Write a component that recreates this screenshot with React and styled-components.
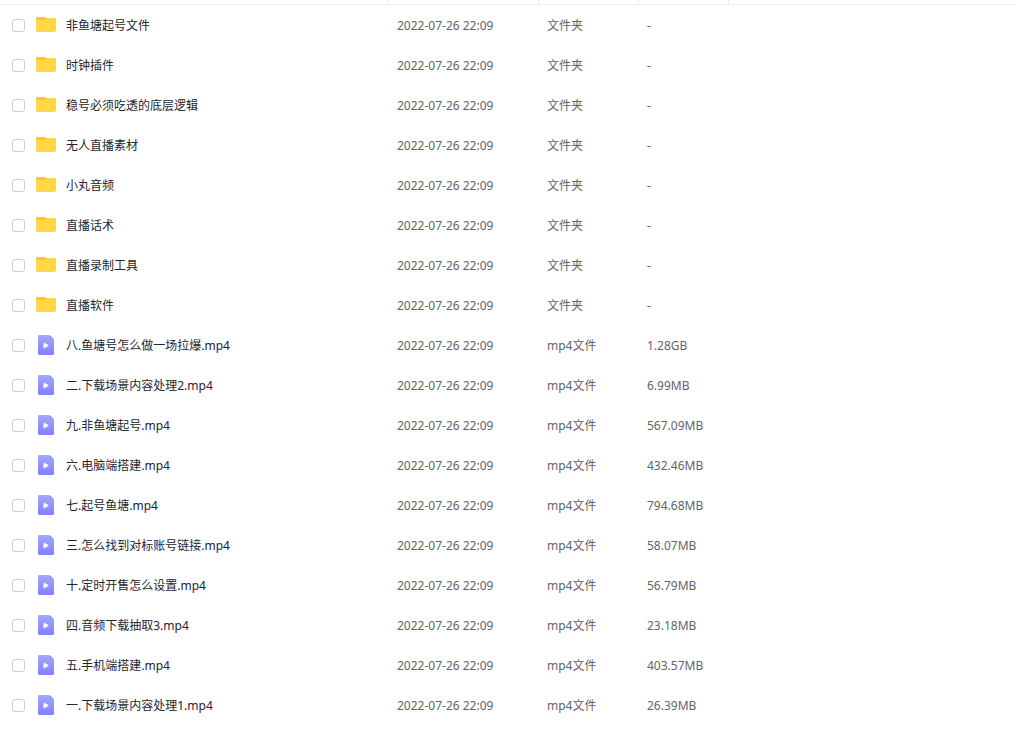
import React from 'react'
import styled, { createGlobalStyle } from 'styled-components'

const GlobalStyle = createGlobalStyle`
body {
    margin: 0;
    background-color: #fff;
    font-family: "Noto Sans", "Noto Sans CJK SC", sans-serif;
    font-size: 12px;
}
`

const Table = styled.table`
width: 100%;
table-layout: fixed;
border-collapse: separate;
border-spacing: 0;
`

const Col = styled.col`
width: ${(props) => props.$width};
`

const HeadCell = styled.th`
height: 4px;
padding: 0;
border-bottom: 1px solid #f1f2f4;
border-right: 1px solid #e9eaee;

&:last-child {
    border-right: none;
}
`

const Cell = styled.td`
box-sizing: border-box;
height: 40px;
padding: 2px 8px 0;
line-height: 20px;
color: #636469;
white-space: nowrap;
`

const NameCell = styled(Cell)`
padding: 0 8px 0 12px;
`

const FileName = styled.label`
display: flex;
align-items: center;
color: #25262b;
cursor: pointer;
`

const NameText = styled.span`
padding-top: 2px;
overflow: hidden;
text-overflow: ellipsis;
`

const Checkbox = styled.input`
appearance: none;
box-sizing: border-box;
flex: none;
width: 13px;
height: 13px;
margin: 0 11px 0 0;
border: 1px solid #cfcfd1;
border-radius: 3px;
background-color: #fff;

&:checked {
    background-color: #06a7ff;
    border-color: #06a7ff;
}
`

const Icon = styled.svg`
flex: none;
width: 20px;
height: 20px;
margin-right: 10px;
`

const FolderIcon = () => (
    <Icon viewBox="0 0 20 20" aria-hidden="true">
        <path d="M0 3.8C0 2.7 .8 2 1.8 2H7.800C8.700 2 9.300 2.200 9.900 2.600L12 3.800V8H0z" fill="#ffc629" />
        <path d="M0 4.900H8.800C9.600 4.900 10 4.700 10.500 4.200L11 3.700C11.500 3.100 11.900 2.900 12.600 2.900H18C19.200 2.900 20 3.700 20 4.900V15.100C20 16.300 19.200 17.100 18 17.100H2C.8 17.100 0 16.300 0 15.100z" fill="#ffd749" />
    </Icon>
)

const VideoIcon = () => (
    <Icon viewBox="0 0 20 20" aria-hidden="true">
        <defs>
            <linearGradient id="video" x1="0" y1="0" x2="0" y2="1">
                <stop offset="0" stopColor="#a6a8ff" />
                <stop offset="1" stopColor="#8080fc" />
            </linearGradient>
        </defs>
        <path d="M3.500 0H12.700L18 5.300V18.500C18 19.400 17.400 20 16.500 20H3.500C2.600 20 2 19.400 2 18.500V1.500C2 .6 2.600 0 3.500 0z" fill="url(#video)" />
        <path d="M12.700 0C14.700 .2 17.800 3 18 5.300C16.600 5.100 16.400 4.700 15.400 3.500C14.400 2.400 13.300 2 12.700 0z" fill="#9a9bfe" />
        <path d="M7.500 8.300C7.500 7.800 7.900 7.600 8.300 7.800L12.300 10.100C12.700 10.300 12.700 10.800 12.300 11L8.300 13.300C7.900 13.500 7.500 13.300 7.500 12.800z" fill="#fff" />
    </Icon>
)

const files = [
    { name: '非鱼塘起号文件' },
    { name: '时钟插件' },
    { name: '稳号必须吃透的底层逻辑' },
    { name: '无人直播素材' },
    { name: '小丸音频' },
    { name: '直播话术' },
    { name: '直播录制工具' },
    { name: '直播软件' },
    { name: '八.鱼塘号怎么做一场拉爆.mp4', size: '1.28GB' },
    { name: '二.下载场景内容处理2.mp4', size: '6.99MB' },
    { name: '九.非鱼塘起号.mp4', size: '567.09MB' },
    { name: '六.电脑端搭建.mp4', size: '432.46MB' },
    { name: '七.起号鱼塘.mp4', size: '794.68MB' },
    { name: '三.怎么找到对标账号链接.mp4', size: '58.07MB' },
    { name: '十.定时开售怎么设置.mp4', size: '56.79MB' },
    { name: '四.音频下载抽取3.mp4', size: '23.18MB' },
    { name: '五.手机端搭建.mp4', size: '403.57MB' },
    { name: '一.下载场景内容处理1.mp4', size: '26.39MB' },
]

const FileRow = ({ file }) => (
    <tr>
        <NameCell>
            <FileName>
                <Checkbox type="checkbox" />
                {file.size ? <VideoIcon /> : <FolderIcon />}
                <NameText>{file.name}</NameText>
            </FileName>
        </NameCell>
        <Cell>2022-07-26 22:09</Cell>
        <Cell>{file.size ? 'mp4文件' : '文件夹'}</Cell>
        <Cell>{file.size || '-'}</Cell>
        <Cell />
    </tr>
)

const App = () => {
    return (
        <>
            <GlobalStyle />
            <Table>
                <colgroup>
                    <Col $width="389px" />
                    <Col $width="150px" />
                    <Col $width="100px" />
                    <Col $width="90px" />
                    <Col $width="auto" />
                </colgroup>
                <thead>
                    <tr>
                        <HeadCell />
                        <HeadCell />
                        <HeadCell />
                        <HeadCell />
                        <HeadCell />
                    </tr>
                </thead>
                <tbody>
                    {files.map((file) => (
                        <FileRow key={file.name} file={file} />
                    ))}
                </tbody>
            </Table>
        </>
    )
}

export default App
